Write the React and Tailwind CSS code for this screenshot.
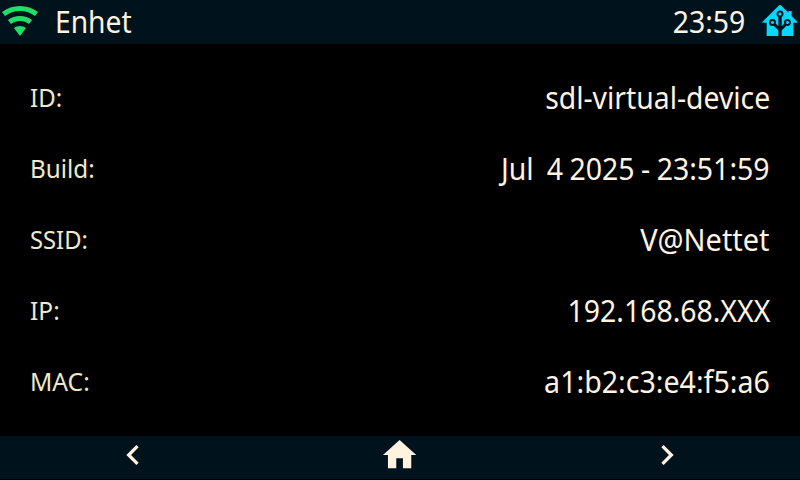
const WIFI = "M12,21L15.6,16.2C14.6,15.45 13.35,15 12,15C10.65,15 9.4,15.45 8.4,16.2L12,21M12,3C7.95,3 4.21,4.34 1.2,6.6L3,9C5.5,7.12 8.62,6 12,6C15.38,6 18.5,7.12 21,9L22.8,6.6C19.79,4.34 16.05,3 12,3M12,9C9.3,9 6.81,9.89 4.8,11.4L6.6,13.8C8.1,12.67 9.97,12 12,12C14.03,12 15.9,12.67 17.4,13.8L19.2,11.4C17.19,9.89 14.7,9 12,9Z";
const ASSISTANT = "M21.8,13H20V21H13V17.67L15.79,14.88L16.5,15C17.66,15 18.6,14.06 18.6,12.9C18.6,11.74 17.66,10.8 16.5,10.8A2.1,2.1 0 0,0 14.4,12.9L14.5,13.61L13,15.13V9.65C13.66,9.29 14.1,8.6 14.1,7.8A2.1,2.1 0 0,0 12,5.7A2.1,2.1 0 0,0 9.9,7.8C9.9,8.6 10.34,9.29 11,9.65V15.13L9.5,13.61L9.6,12.9A2.1,2.1 0 0,0 7.5,10.8A2.1,2.1 0 0,0 5.4,12.9A2.1,2.1 0 0,0 7.5,15L8.21,14.88L11,17.67V21H4V13H2.25C1.83,13 1.42,13 1.42,12.79C1.43,12.57 1.85,12.15 2.28,11.72L11,3C11.33,2.67 11.67,2.33 12,2.33C12.33,2.33 12.67,2.67 13,3L17,7V6H19V9L21.78,11.78C22.18,12.18 22.59,12.59 22.6,12.8C22.6,13 22.2,13 21.8,13M7.5,12A0.9,0.9 0 0,1 8.4,12.9A0.9,0.9 0 0,1 7.5,13.8A0.9,0.9 0 0,1 6.6,12.9A0.9,0.9 0 0,1 7.5,12M16.5,12C17,12 17.4,12.4 17.4,12.9C17.4,13.4 17,13.8 16.5,13.8A0.9,0.9 0 0,1 15.6,12.9A0.9,0.9 0 0,1 16.5,12M12,6.9C12.5,6.9 12.9,7.3 12.9,7.8C12.9,8.3 12.5,8.7 12,8.7C11.5,8.7 11.1,8.3 11.1,7.8C11.1,7.3 11.5,6.9 12,6.9Z";
const LEFT = "M15.41,16.58L10.83,12L15.41,7.41L14,6L8,12L14,18L15.41,16.58Z";
const HOME = "M10,20V14H14V20H19V12H22L12,3L2,12H5V20H10Z";
const RIGHT = "M8.59,16.58L13.17,12L8.59,7.41L10,6L16,12L10,18L8.59,16.58Z";

// Each row carries its own condensing factors for label and value.
const rows = [
  ["ID:", "scale-x-[0.96]", "sdl-virtual-device", "scale-x-[0.914]"],
  ["Build:", "scale-x-[0.97]", "Jul  4 2025 - 23:51:59", "scale-x-[0.918] [word-spacing:-1px]"],
  ["SSID:", "scale-x-[0.95]", "V@Nettet", "scale-x-[0.934]"],
  ["IP:", "scale-x-[0.98]", "192.168.68.XXX", "scale-x-[0.916]"],
  ["MAC:", "scale-x-[0.985]", "a1:b2:c3:e4:f5:a6", "scale-x-[0.922]"],
];

function Icon({ d, className = "" }) {
  return (
    <svg viewBox="0 0 24 24" fill="currentColor" className={`size-10 shrink-0 ${className}`}>
      <path d={d} />
    </svg>
  );
}

export default function App() {
  return (
    <div className="flex h-[480px] w-[800px] flex-col overflow-hidden bg-black font-['Noto_Sans',sans-serif] text-[#fff3e0]">
      <header className="flex h-11 items-center bg-[#00131c] pb-0.5">
        <Icon d={WIFI} className="text-[#22dd66]" />
        <h1 className="ml-[15px] origin-left scale-x-[0.91] text-[31px] leading-10">Enhet</h1>
        <time className="ml-auto mr-[15px] origin-right scale-x-[0.915] text-[31px] leading-10">23:59</time>
        <Icon d={ASSISTANT} className="text-[#00d9ff]" />
      </header>
      <dl className="flex flex-1 flex-col px-[30px] pt-[17px]">
        {rows.map(([label, labelFit, value, valueFit]) => (
          <div key={label} className="flex h-[71px] items-center justify-between">
            <dt className={`origin-left text-[25px] leading-8 text-[#eee8cd] ${labelFit}`}>{label}</dt>
            <dd className={`origin-right whitespace-pre text-[31px] leading-10 ${valueFit}`}>{value}</dd>
          </div>
        ))}
      </dl>
      <nav className="mb-px grid h-[43px] grid-cols-3 bg-[#00131c]">
        <button className="flex items-start justify-center">
          <Icon d={LEFT} className="-mt-px" />
        </button>
        <button className="flex items-start justify-center">
          <Icon d={HOME} className="-mt-px -translate-x-[0.4px]" />
        </button>
        <button className="flex items-start justify-center">
          <Icon d={RIGHT} className="-mt-px" />
        </button>
      </nav>
    </div>
  );
}
